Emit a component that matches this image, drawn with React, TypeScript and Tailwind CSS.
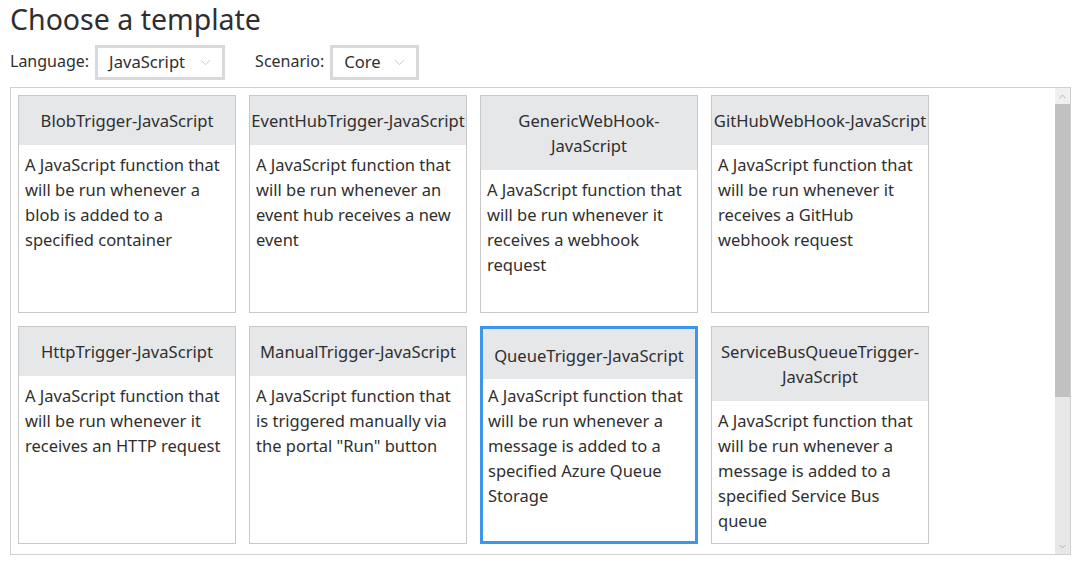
import { ChevronDown, ChevronUp } from "lucide-react";

type Template = {
  title: string[];
  lines: string[];
  selected?: boolean;
};

const templates: Template[] = [
  {
    title: ["BlobTrigger-JavaScript"],
    lines: ["A JavaScript function that", "will be run whenever a", "blob is added to a", "specified container"],
  },
  {
    title: ["EventHubTrigger-JavaScript"],
    lines: ["A JavaScript function that", "will be run whenever an", "event hub receives a new", "event"],
  },
  {
    title: ["GenericWebHook-", "JavaScript"],
    lines: ["A JavaScript function that", "will be run whenever it", "receives a webhook", "request"],
  },
  {
    title: ["GitHubWebHook-JavaScript"],
    lines: ["A JavaScript function that", "will be run whenever it", "receives a GitHub", "webhook request"],
  },
  {
    title: ["HttpTrigger-JavaScript"],
    lines: ["A JavaScript function that", "will be run whenever it", "receives an HTTP request"],
  },
  {
    title: ["ManualTrigger-JavaScript"],
    lines: ["A JavaScript function that", "is triggered manually via", 'the portal "Run" button'],
  },
  {
    title: ["QueueTrigger-JavaScript"],
    lines: [
      "A JavaScript function that",
      "will be run whenever a",
      "message is added to a",
      "specified Azure Queue",
      "Storage",
    ],
    selected: true,
  },
  {
    title: ["ServiceBusQueueTrigger-", "JavaScript"],
    lines: [
      "A JavaScript function that",
      "will be run whenever a",
      "message is added to a",
      "specified Service Bus",
      "queue",
    ],
  },
];

const TemplateCard = ({ t }: { t: Template }) => (
  <div
    className={
      t.selected
        ? "w-[218px] h-[218px] bg-white border-[3px] border-[#3d96ea] overflow-hidden flex flex-col"
        : "w-[218px] h-[218px] bg-white border border-[#c8c8c8] overflow-hidden flex flex-col"
    }
  >
    <div
      className={
        t.selected
          ? "bg-[#e6e7e9] pt-[14px] pb-[11px] text-center leading-[25px] text-[16.6px] whitespace-nowrap"
          : "bg-[#e6e7e9] py-3 text-center leading-[25px] text-[16.6px] whitespace-nowrap"
      }
    >
      {t.title.map((l, i) => (
        <div key={i}>{l}</div>
      ))}
    </div>
    <div
      className={
        t.selected
          ? "px-[5px] pt-[4px] leading-[25px] text-[16.5px]"
          : "px-[6px] pt-[7px] leading-[25px] text-[16.5px]"
      }
    >
      {t.lines.map((l, i) => (
        <div key={i} className="whitespace-nowrap">
          {l}
        </div>
      ))}
    </div>
  </div>
);

const FakeSelect = ({ value, width }: { value: string; width: string }) => (
  <div
    className={`${width} h-[35px] border-[3px] border-[#d9d9d9] flex items-center justify-between pl-[11px] pr-[8px] text-[16.6px]`}
  >
    <span>{value}</span>
    <ChevronDown size={17} strokeWidth={1.3} className="text-[#c4c4c4]" />
  </div>
);

export default function App() {
  return (
    <div
      className="w-[1081px] h-[587px] bg-white text-[#2f2f2f] px-[10px] overflow-hidden"
      style={{ fontFamily: '"Segoe UI", "Noto Sans", "Open Sans", sans-serif' }}
    >
      <h1 className="text-[28.5px] leading-[38px]">Choose a template</h1>
      <div className="flex items-center mt-[7px] h-[35px]">
        <span className="text-[16px] mr-[6px] -mt-[3px]">Language:</span>
        <FakeSelect value="JavaScript" width="w-[130px]" />
        <span className="text-[16px] ml-[30px] mr-[6px] -mt-[3px]">Scenario:</span>
        <FakeSelect value="Core" width="w-[89px]" />
      </div>
      <div className="mt-[7px] h-[468px] border border-[#d0d0d0] flex overflow-hidden">
        <div className="flex-1 p-[7px] overflow-hidden">
          <div className="grid grid-cols-[repeat(4,218px)] gap-[13px]">
            {templates.map((t) => (
              <TemplateCard key={t.title.join("")} t={t} />
            ))}
          </div>
        </div>
        <div className="w-[15px] flex flex-col bg-[#e8e8e8]">
          <div className="h-[16px] bg-[#f0f0f0] flex items-center justify-center">
            <ChevronUp size={11} strokeWidth={1.5} className="text-[#9a9a9a]" />
          </div>
          <div className="h-[293px] bg-[#c1c1c1]" />
          <div className="flex-1" />
          <div className="h-[16px] flex items-center justify-center">
            <ChevronDown size={11} strokeWidth={1.5} className="text-[#9a9a9a]" />
          </div>
        </div>
      </div>
    </div>
  );
}
